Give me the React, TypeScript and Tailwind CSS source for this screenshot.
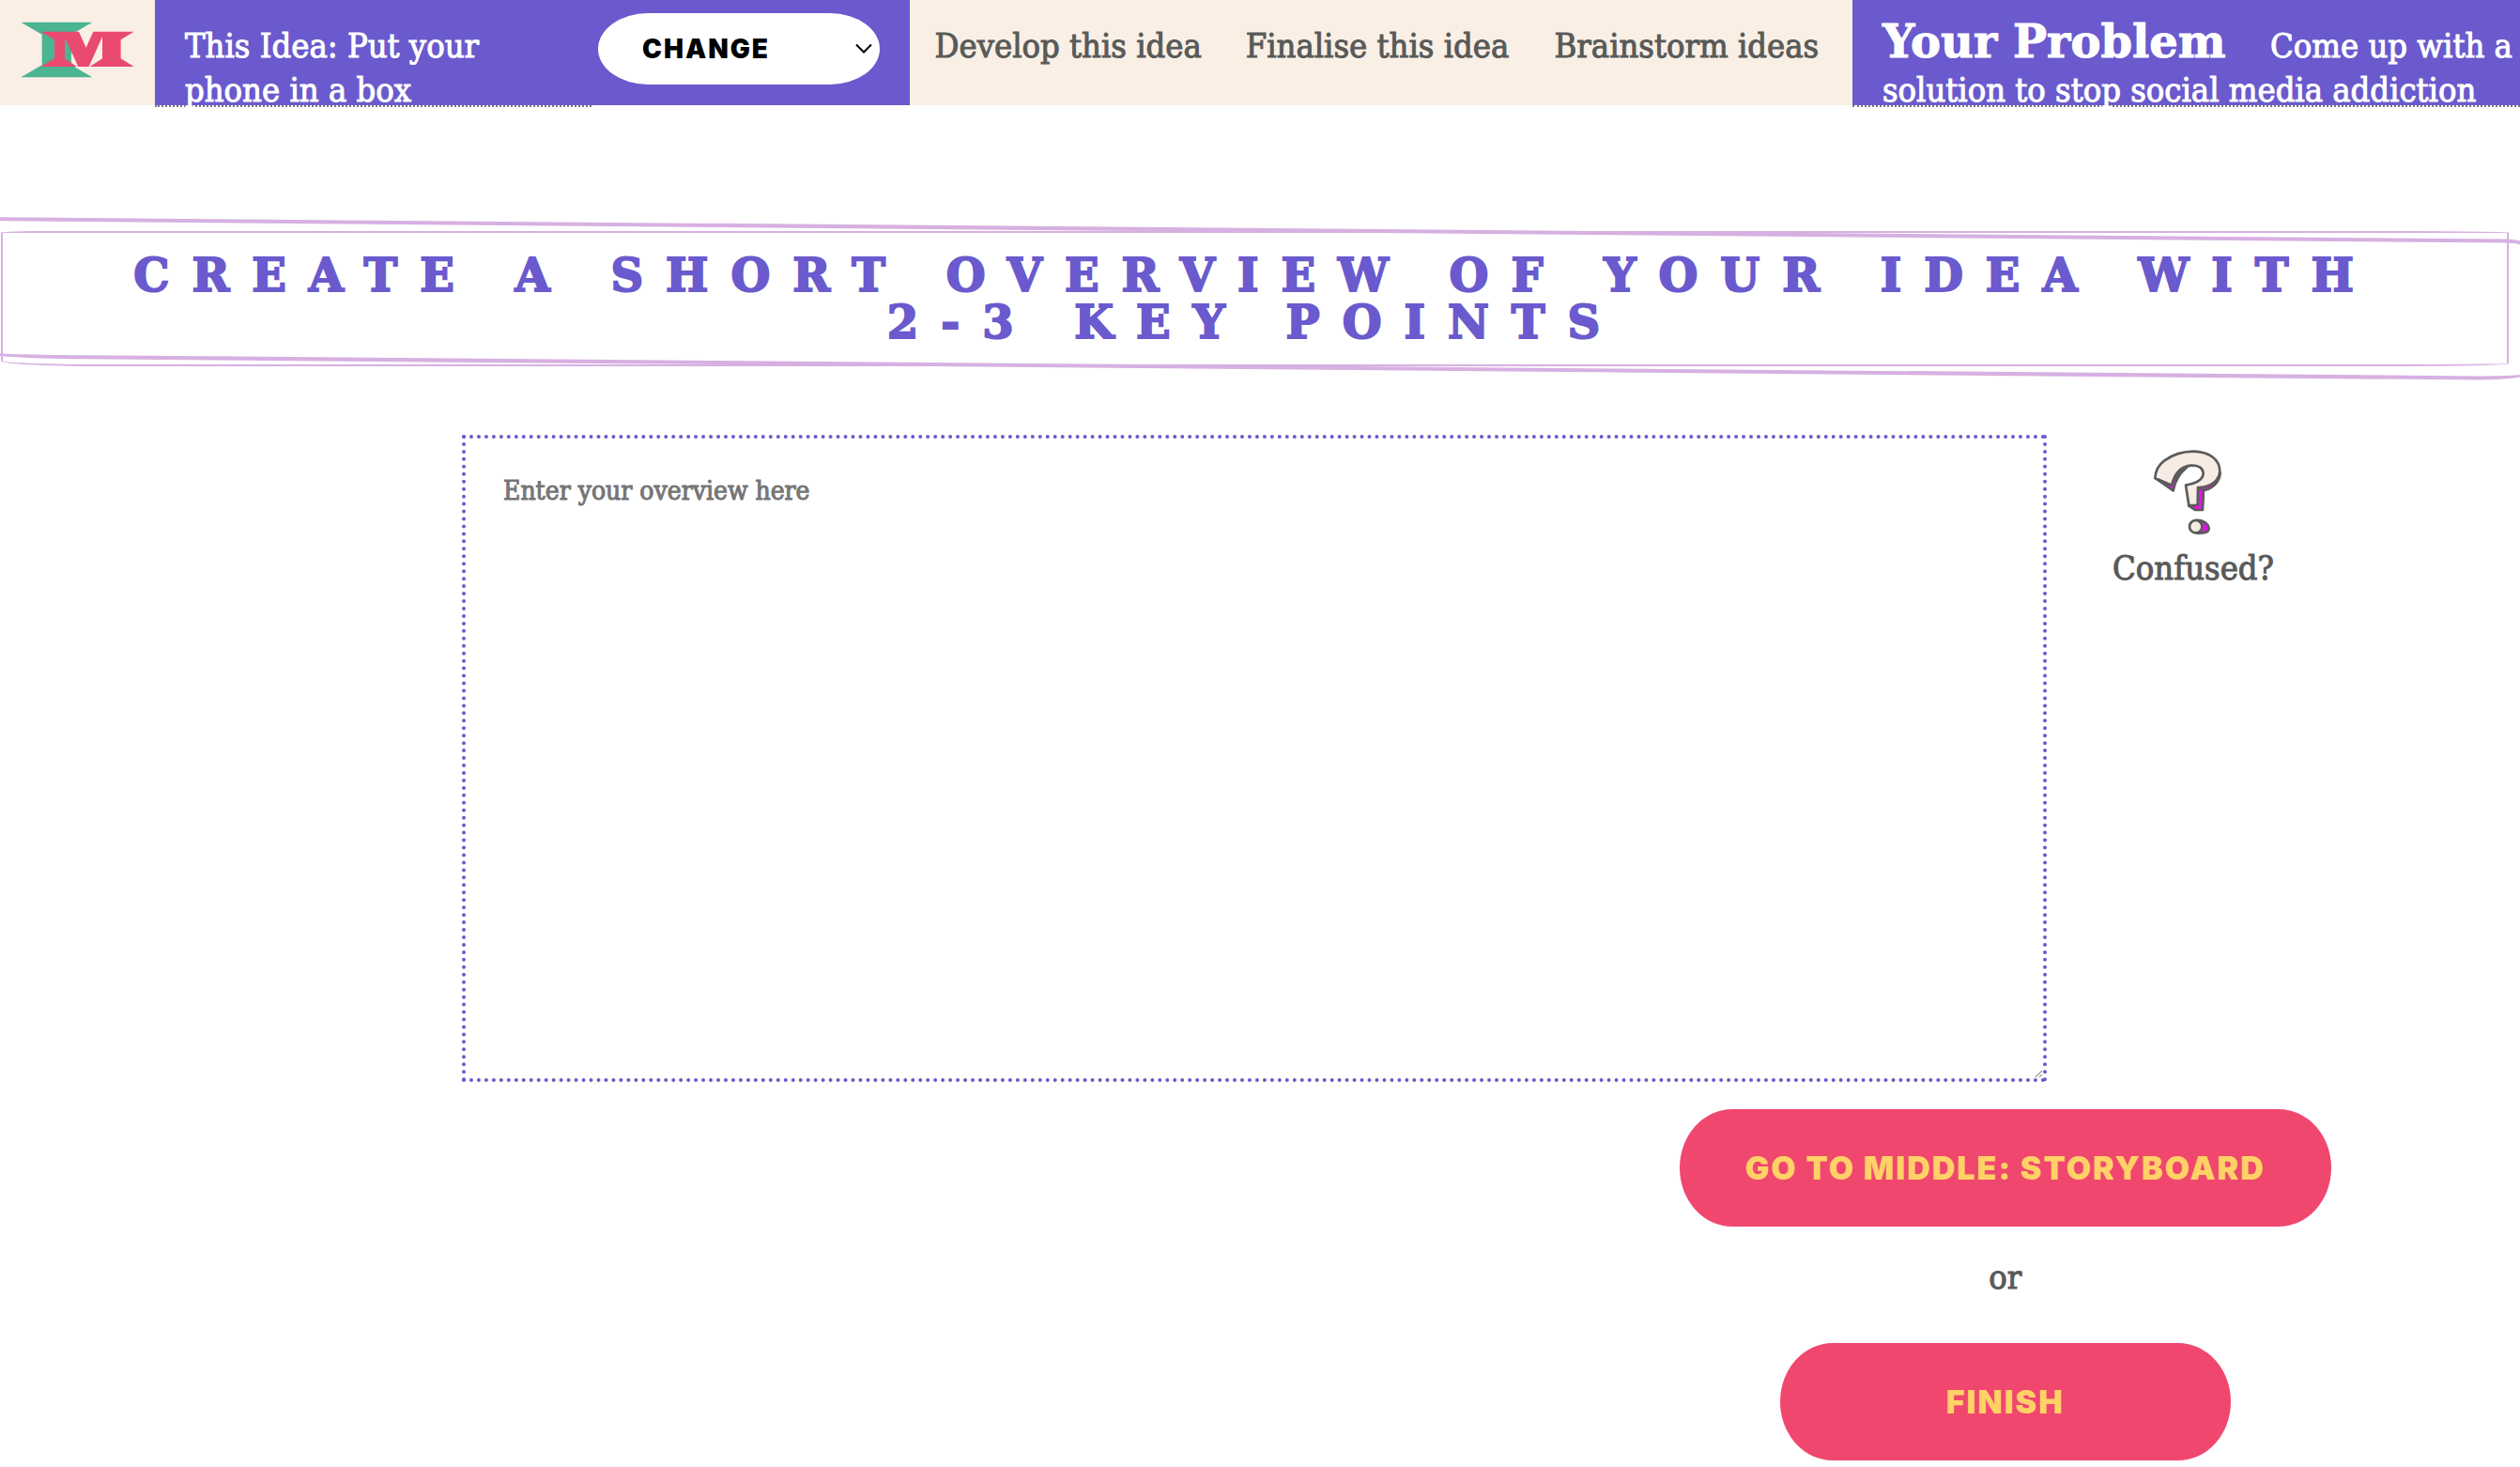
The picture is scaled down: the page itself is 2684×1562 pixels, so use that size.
import React from "react";

const slab = "font-['DejaVu_Serif_Condensed','DejaVu_Serif',serif] [-webkit-text-stroke:1px_currentColor]";

function Logo() {
  return (
    <svg viewBox="0 0 495 336" className="block h-28 w-[165px]" role="img" aria-label="IM">
      <path fill="#4bb592" d="M67 71H295L228 110V208L295 247H67L134 208V110Z" />
      <path
        fill="#ea4a6f"
        d="M130 101H252L275 152L298 101H428L386 127V187L428 213H287L327 187V117L284 213H250L207 120V187L246 213H130L174 187V127Z"
      />
    </svg>
  );
}

function QuestionMark() {
  return (
    <svg
      viewBox="520 110 222 282"
      className="mr-3 mb-2.5 h-[94px] w-[74px]"
      fill="none"
      stroke="#5b5b5b"
      strokeWidth="8"
      strokeLinejoin="round"
      aria-hidden="true"
    >
      <path fill="#e711ea" d="M527 206L585 246C590 220 605 190 628 172L612 172L576 226Z" />
      <path fill="#e711ea" d="M662 236L676 246C705 244 733 222 735 190L720 200Z" />
      <path fill="#e711ea" d="M662 236L682 244L679 308H655L634 294L661 290Z" />
      <path
        fill="#f6ece3"
        d="M527 206C528 184 536 166 556 151C580 133 612 121 650 121C700 122 733 146 734 184C733 213 705 236 664 236L663 293H635L625 229C655 224 682 212 681 189C679 172 662 164 641 166C607 169 588 197 580 229Z"
      />
      <path fill="#e711ea" d="M657 341C680 338 698 352 699 368C697 381 683 383 660 382Z" />
      <ellipse fill="#f6ece3" cx="657" cy="361" rx="20" ry="20" />
    </svg>
  );
}

function Pill({ children, className }: { children: React.ReactNode; className: string }) {
  return (
    <button
      type="button"
      className={`h-[125px] rounded-[56px/50%] bg-[#f0476f] font-['Inter',sans-serif] text-[34px] font-black tracking-[2px] text-[#ffd166] [-webkit-text-stroke:0] ${className}`}
    >
      {children}
    </button>
  );
}

export default function App() {
  return (
    <div className={`overflow-x-hidden bg-white text-[#585a59] ${slab}`}>
      <header className="grid grid-cols-[165px_804fr_1004fr_711fr] grid-rows-[112px] bg-[#faefe5] text-[36px] leading-[47px]">
        <a href="#home" className="block">
          <Logo />
        </a>
        <div className="flex items-start bg-[#6a5acd]">
          <p className="h-[114px] w-[465px] border-b-2 border-dotted border-[#777] pt-[25px] pr-10 pl-8 text-white">
            This Idea: Put your phone in a box
          </p>
          <div className="relative mt-3.5 ml-[7px] w-[300px]">
            <select
              aria-label="Change idea"
              className="block h-[76px] w-full appearance-none rounded-[53px/50%] bg-white pl-[47px] font-['Inter',sans-serif] text-[28px] font-black tracking-[2px] text-black [-webkit-text-stroke:0]"
            >
              <option>CHANGE</option>
            </select>
            <svg
              viewBox="0 0 18 12"
              className="pointer-events-none absolute top-8 right-2 h-3 w-[18px]"
              fill="none"
              stroke="#000"
              strokeWidth="2"
              aria-hidden="true"
            >
              <path d="M1 1.500L9 9.500L17 1.500" />
            </svg>
          </div>
        </div>
        <nav className="grid grid-cols-3 pt-[25px] pr-3 pl-1 text-center whitespace-nowrap">
          <a href="#develop">Develop this idea</a>
          <a href="#finalise">Finalise this idea</a>
          <a href="#brainstorm">Brainstorm ideas</a>
        </nav>
        <div className="bg-[#6a5acd]">
          <p className="h-[114px] border-b-2 border-dotted border-[#777] pt-[25px] pl-8 text-white">
            <strong className="inline-block min-w-[413px] font-['DejaVu_Serif',serif] text-[48px] leading-9 font-bold">
              Your Problem
            </strong>
            <span>Come up with a</span> <span>solution to stop social media addiction</span>
          </p>
        </div>
      </header>

      <main className="flex flex-col pb-2">
        <h1 className="relative mt-[134px] mr-3 ml-px rounded-[2%_6%_5%_4%/1%_1%_2%_4%] border-2 border-[#d7b0e2] px-14 py-5 text-center font-['DejaVu_Serif',serif] text-[48px] leading-[50px] font-bold tracking-[24px] text-[#6a5acd] uppercase [-webkit-text-stroke:2px_currentColor] before:absolute before:-inset-1 before:scale-[1.015] before:rotate-[0.5deg] before:rounded-[1%_1%_2%_4%/2%_6%_5%_4%] before:border-4 before:border-[#d7b0e2] before:content-['']">
          Create a short overview of your idea with <span className="whitespace-nowrap">2-3 key points</span>
        </h1>

        <section className="mt-[73px] grid grid-cols-[492fr_1688fr_504fr]">
          <textarea
            aria-label="Overview"
            placeholder="Enter your overview here"
            className="col-start-2 block h-[689px] w-full resize border-4 border-dotted border-[#6a5acd] bg-white px-10 py-9 text-[28px] leading-[40px] placeholder:text-[#757575]"
          />
          <button type="button" className="mt-3.5 flex w-[312px] flex-col items-center self-start text-[36px] leading-[48px]">
            <QuestionMark />
            Confused?
          </button>
        </section>

        <section className="mt-[29px] mr-[7.5%] flex flex-col items-center self-end">
          <Pill className="w-[694px]">GO TO MIDDLE: STORYBOARD</Pill>
          <p className="pt-[30px] pb-[46px] text-[36px] leading-[48px]">or</p>
          <Pill className="w-[480px]">FINISH</Pill>
        </section>
      </main>
    </div>
  );
}
